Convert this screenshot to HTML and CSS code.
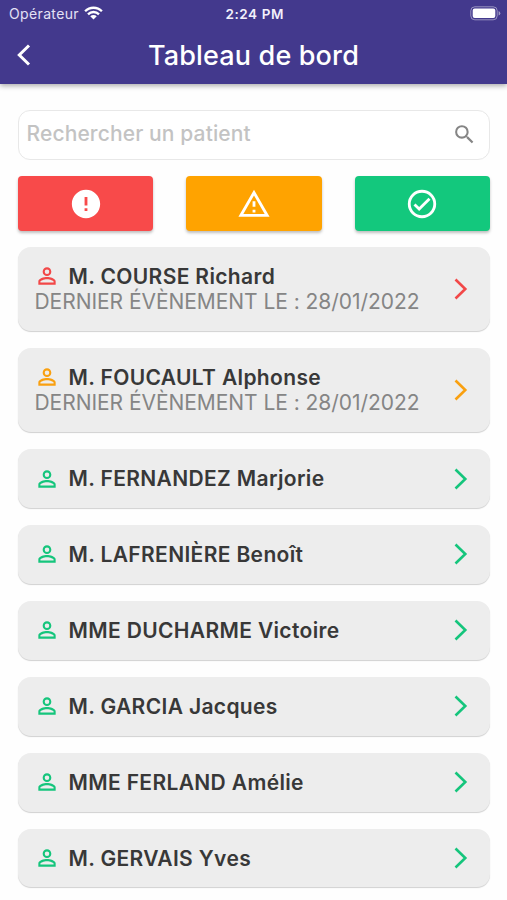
FILE: index.html
```html
<!DOCTYPE html>
<html lang="fr">
<head>
<meta charset="utf-8">
<meta name="viewport" content="width=device-width, initial-scale=1">
<title>Tableau de bord</title>
<link rel="stylesheet" href="styles.css">
</head>
<body>
<svg class="defs" width="0" height="0" aria-hidden="true">
  <symbol id="person" viewBox="0 0 24 24"><path d="M12 5.9a2.1 2.1 0 1 1 0 4.2 2.1 2.1 0 0 1 0-4.2m0 9c2.97 0 6.1 1.46 6.1 2.1v1.1H5.9V17c0-.64 3.13-2.1 6.1-2.1M12 4C9.79 4 8 5.79 8 8s1.79 4 4 4 4-1.79 4-4-1.79-4-4-4zm0 9c-2.67 0-8 1.34-8 4v3h16v-3c0-2.66-5.33-4-8-4z"/></symbol>
  <symbol id="chevron" viewBox="0 0 14 22"><path d="M1.5 1.5 11.3 11 1.5 20.5" fill="none" stroke="currentColor" stroke-width="2.6"/></symbol>
</svg>
<header class="appbar">
  <div class="status">
    <div class="carrier"><span class="carrier-name">Opérateur</span>
      <svg class="wifi" viewBox="0 0 20 15"><path d="M1 5.6a12.7 12.7 0 0 1 18 0M4.1 8.9a8.3 8.3 0 0 1 11.8 0" fill="none" stroke="#fff" stroke-width="2.5"/><path d="M10 14.4 6.5 11a5 5 0 0 1 7 0z" fill="#fff"/></svg>
    </div>
    <span class="time">2:24 PM</span>
    <svg class="battery" viewBox="0 0 31 15"><rect x=".8" y=".8" width="26.4" height="13" rx="4" fill="none" stroke="#fff" stroke-opacity=".45"/><rect x="2.7" y="2.6" width="22.6" height="9.4" rx="2" fill="#fff"/><path d="M28.6 5v4.6q1.7-.7 1.7-2.3T28.6 5" fill="#fff" fill-opacity=".5"/></svg>
  </div>
  <div class="titlebar">
    <svg class="back" viewBox="0 0 14 22"><path d="M12 1.5 2.3 11 12 20.5" fill="none" stroke="#fff" stroke-width="3"/></svg>
    <h1 class="title">Tableau de bord</h1>
  </div>
</header>
<main class="content">
  <div class="search">
    <span class="placeholder">Rechercher un patient</span>
    <svg class="search-icon" viewBox="0 0 24 24"><path d="M15.5 14h-.79l-.28-.27A6.47 6.47 0 0 0 16 9.5 6.5 6.5 0 1 0 9.5 16c1.61 0 3.09-.59 4.23-1.57l.27.28v.79l5 4.99L20.49 19l-4.99-5zm-6 0C7.01 14 5 11.99 5 9.5S7.01 5 9.5 5 14 7.01 14 9.5 11.99 14 9.5 14z"/></svg>
  </div>
  <div class="filters">
    <button class="filter danger" aria-label="Urgent"><svg viewBox="0 0 24 24"><path d="M12 2C6.48 2 2 6.48 2 12s4.48 10 10 10 10-4.48 10-10S17.52 2 12 2zm1 15h-2v-2h2v2zm0-4h-2V7h2v6z"/></svg></button>
    <button class="filter warning" aria-label="Attention"><svg viewBox="0 0 24 24"><path d="M12 5.99 19.53 19H4.47L12 5.99M12 2 1 21h22L12 2zm1 14h-2v2h2v-2zm0-6h-2v4h2v-4z"/></svg></button>
    <button class="filter success" aria-label="Normal"><svg viewBox="0 0 24 24"><path d="M12 2a10 10 0 1 0 0 20 10 10 0 0 0 0-20zm0 18a8 8 0 1 1 0-16 8 8 0 0 1 0 16zm4.59-12.42L10 14.17l-2.59-2.58L6 13l4 4 8-8-1.41-1.42z"/></svg></button>
  </div>
  <div class="patients">
    <article class="card detailed is-danger"><div class="info"><div class="patient"><svg class="person"><use href="#person"/></svg><span class="name">M. COURSE Richard</span></div><div class="event">DERNIER ÉVÈNEMENT LE : 28/01/2022</div></div><svg class="chevron"><use href="#chevron"/></svg></article>
    <article class="card detailed is-warning"><div class="info"><div class="patient"><svg class="person"><use href="#person"/></svg><span class="name">M. FOUCAULT Alphonse</span></div><div class="event">DERNIER ÉVÈNEMENT LE : 28/01/2022</div></div><svg class="chevron"><use href="#chevron"/></svg></article>
    <article class="card"><div class="patient"><svg class="person"><use href="#person"/></svg><span class="name">M. FERNANDEZ Marjorie</span></div><svg class="chevron"><use href="#chevron"/></svg></article>
    <article class="card"><div class="patient"><svg class="person"><use href="#person"/></svg><span class="name">M. LAFRENIÈRE Benoît</span></div><svg class="chevron"><use href="#chevron"/></svg></article>
    <article class="card"><div class="patient"><svg class="person"><use href="#person"/></svg><span class="name">MME DUCHARME Victoire</span></div><svg class="chevron"><use href="#chevron"/></svg></article>
    <article class="card"><div class="patient"><svg class="person"><use href="#person"/></svg><span class="name">M. GARCIA Jacques</span></div><svg class="chevron"><use href="#chevron"/></svg></article>
    <article class="card"><div class="patient"><svg class="person"><use href="#person"/></svg><span class="name">MME FERLAND Amélie</span></div><svg class="chevron"><use href="#chevron"/></svg></article>
    <article class="card"><div class="patient"><svg class="person"><use href="#person"/></svg><span class="name">M. GERVAIS Yves</span></div><svg class="chevron"><use href="#chevron"/></svg></article>
  </div>
</main>
</body>
</html>
```
FILE: styles.css
```css
* { box-sizing: border-box; }
body { margin: 0; height: 900px; overflow: hidden; background: #fefefe; font-family: Inter, "Liberation Sans", sans-serif; }
svg { display: block; fill: currentColor; flex: none; }
.defs { position: absolute; }
.appbar { height: 84px; background: #43398d; color: #fff; box-shadow: 0 2px 5px rgba(0, 0, 0, .32); }
.status { height: 27px; display: grid; grid-template-columns: 1fr auto 1fr; align-items: center; padding: 0 6.5px 0 9px; font-size: 13.5px; }
.carrier { display: flex; align-items: center; gap: 5px; color: #e4e1f5; }
.carrier-name { font-size: 14px; letter-spacing: .36px; }
.wifi { width: 19px; height: 14px; margin-top: -1px; }
.time { font-weight: 600; font-size: 13.5px; letter-spacing: .6px; color: #f2f0fb; }
.battery { width: 31px; height: 15px; justify-self: end; }
.titlebar { height: 57px; display: grid; grid-template-columns: 40px 1fr 40px; align-items: center; }
.back { width: 14px; height: 22px; margin: -1px 0 0 17px; }
.title { margin: 0; text-align: center; font-size: 27px; line-height: 57px; font-weight: 500; letter-spacing: .15px; }
.content { padding: 26px 17px 0 18px; }
.search { height: 50px; border: 1.5px solid #e8e8e8; border-radius: 12px; background: #fff; display: flex; align-items: center; justify-content: space-between; padding: 0 12px 0 7.5px; }
.placeholder { color: #c3c3c3; font-size: 21px; line-height: 26px; font-weight: 500; letter-spacing: .12px; margin-top: -2px; }
.search-icon { width: 25px; height: 25px; color: #858585; margin-top: -1px; }
.filters { display: grid; grid-template-columns: repeat(3, 1fr); gap: 33px; margin-top: 16px; }
.filter { height: 55px; padding: 0; border: 0; border-radius: 4px; color: #fff; display: flex; align-items: center; justify-content: center; box-shadow: 0 2px 3px rgba(0, 0, 0, .25); }
.filter svg { width: 34px; height: 34px; }
.danger { background: #f84a4a; }
.warning { background: #ffa300; }
.success { background: #13c87d; }
.patients { margin-top: 16px; display: grid; gap: 17.1px; }
.card { height: 58.8px; padding: 0 22.5px 0 16.5px; border-radius: 13px; background: #ededed; color: #15c57c; display: flex; align-items: center; justify-content: space-between; box-shadow: 0 1px 1px rgba(0, 0, 0, .18); }
.card.detailed { height: 84px; }
.is-danger { color: #f24848; }
.is-warning { color: #f9a010; }
.patient { display: flex; align-items: center; gap: 8.5px; height: 26px; }
.person { width: 26px; height: 26px; margin-left: -.5px; }
.name { padding-top: 1px; color: #383838; font-size: 21px; line-height: 26px; font-weight: 600; letter-spacing: .35px; white-space: nowrap; }
.detailed .name { padding-top: 1.6px; }
.event { color: #858585; font-size: 21px; line-height: 25px; letter-spacing: -.05px; white-space: nowrap; }
.info { margin-top: -1.2px; }
.chevron { width: 14px; height: 22px; }
```
